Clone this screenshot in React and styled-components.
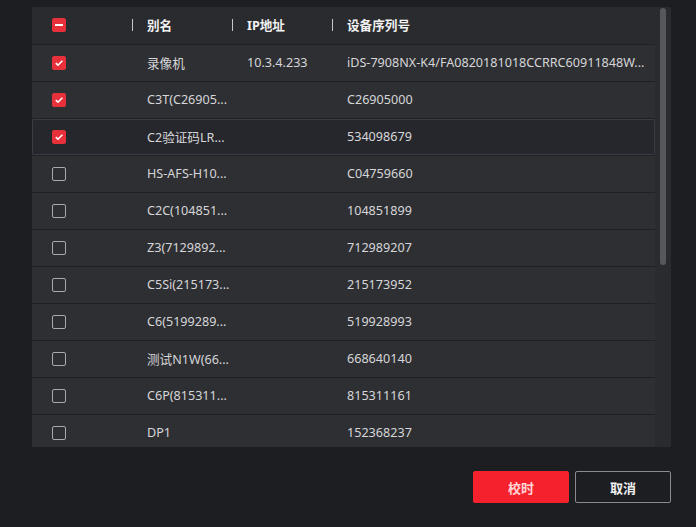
import React from 'react'
import styled, { createGlobalStyle } from 'styled-components'

const Global = createGlobalStyle`
  html, body { margin: 0; padding: 0; background: #1d1e21; }
  body { font-family: "Noto Sans", "Noto Sans CJK SC", sans-serif; font-size: 12.6px; color: #d6d6d8; }
`

const Page = styled.div`
  width: 696px;
  height: 527px;
  padding: 7px 25px 0 32px;
  box-sizing: border-box;
  display: flex;
  flex-direction: column;
`

const Panel = styled.div`
  width: 639px;
  height: 440px;
  background: #2d2e32;
  display: flex;
  border-radius: 2px;
  overflow: hidden;
`

const TableArea = styled.div`
  width: 623px;
  display: flex;
  flex-direction: column;
`

const Track = styled.div`
  width: 16px;
  background: #2a2b2f;
  display: flex;
  justify-content: center;
  padding-top: 1px;
`

const Thumb = styled.div`
  width: 6px;
  height: 257px;
  border-radius: 3px;
  background: #57585e;
`

const Grid = styled.div`
  display: grid;
  grid-template-columns: 100px 100px 100px 1fr;
  align-items: center;
  flex-shrink: 0;
`

const HeaderRow = styled(Grid)`
  height: 35px;
  padding-bottom: 2px;
  background: #2a2b2f;
  border-bottom: 1px solid #1f2023;
  font-weight: 700;
  color: #f2f2f2;
`

const Row = styled(Grid)`
  height: 34px;
  padding-bottom: 2px;
  border-bottom: 1px solid #1f2023;
  background: ${p => (p.$hl ? '#26272d' : '#2e2f33')};
  ${p => p.$hl && 'box-shadow: inset 0 0 0 1px #3a3b44; border-radius: 2px;'}
`

const CheckCell = styled.div`
  display: flex;
  padding-left: 20px;
  padding-top: 1px;
`

const Cell = styled.div`
  padding-left: 15px;
  white-space: nowrap;
  overflow: hidden;
  text-overflow: ellipsis;
`

const HeadCell = styled.div`
  display: flex;
  align-items: center;
  gap: 14px;
  &::before {
    content: '';
    width: 1px;
    height: 12px;
    background: #c8c8c8;
  }
`

const Box = styled.span`
  width: 14px;
  height: 14px;
  box-sizing: border-box;
  border-radius: 2px;
  display: flex;
  align-items: center;
  justify-content: center;
  background: ${p => (p.$on ? '#e8303a' : 'transparent')};
  border: 1px solid ${p => (p.$on ? '#e8303a' : '#a9a9ad')};
`

const Footer = styled.div`
  display: flex;
  justify-content: flex-end;
  gap: 6px;
  margin-top: 24px;
`

const Btn = styled.button`
  width: 96px;
  height: 32px;
  border-radius: 2px;
  font-family: inherit;
  font-size: 13px;
  font-weight: 700;
  cursor: pointer;
  background: ${p => (p.$primary ? '#f5222d' : '#1d1e21')};
  color: ${p => (p.$primary ? '#ffd6d8' : '#f0f0f0')};
  border: 1px solid ${p => (p.$primary ? '#f5222d' : '#8a8b90')};
`

function Check({ on, partial }) {
  return (
    <Box $on={on}>
      {on && partial && <svg width="8" height="8"><rect x="0" y="3" width="8" height="2" fill="#fff" /></svg>}
      {on && !partial && (
        <svg width="10" height="10" viewBox="0 0 10 10">
          <path d="M1.8 5.2 L4 7.2 L8.4 2.8" stroke="#fff" strokeWidth="1.6" fill="none" />
        </svg>
      )}
    </Box>
  )
}

const rows = [
  ['录像机', '10.3.4.233', 'iDS-7908NX-K4/FA0820181018CCRRC60911848W...', true],
  ['C3T(C26905...', '', 'C26905000', true],
  ['C2验证码LR...', '', '534098679', true, true],
  ['HS-AFS-H10...', '', 'C04759660'],
  ['C2C(104851...', '', '104851899'],
  ['Z3(7129892...', '', '712989207'],
  ['C5Si(215173...', '', '215173952'],
  ['C6(5199289...', '', '519928993'],
  ['测试N1W(66...', '', '668640140'],
  ['C6P(815311...', '', '815311161'],
  ['DP1', '', '152368237'],
]

function App() {
  return (
    <Page>
      <Global />
      <Panel>
        <TableArea>
          <HeaderRow>
            <CheckCell><Check on partial /></CheckCell>
            <HeadCell>别名</HeadCell>
            <HeadCell>IP地址</HeadCell>
            <HeadCell>设备序列号</HeadCell>
          </HeaderRow>
          {rows.map(([name, ip, sn, on, hl], i) => (
            <Row key={i} $hl={hl}>
              <CheckCell><Check on={on} /></CheckCell>
              <Cell>{name}</Cell>
              <Cell>{ip}</Cell>
              <Cell>{sn}</Cell>
            </Row>
          ))}
        </TableArea>
        <Track><Thumb /></Track>
      </Panel>
      <Footer>
        <Btn $primary>校时</Btn>
        <Btn>取消</Btn>
      </Footer>
    </Page>
  )
}

export default App
